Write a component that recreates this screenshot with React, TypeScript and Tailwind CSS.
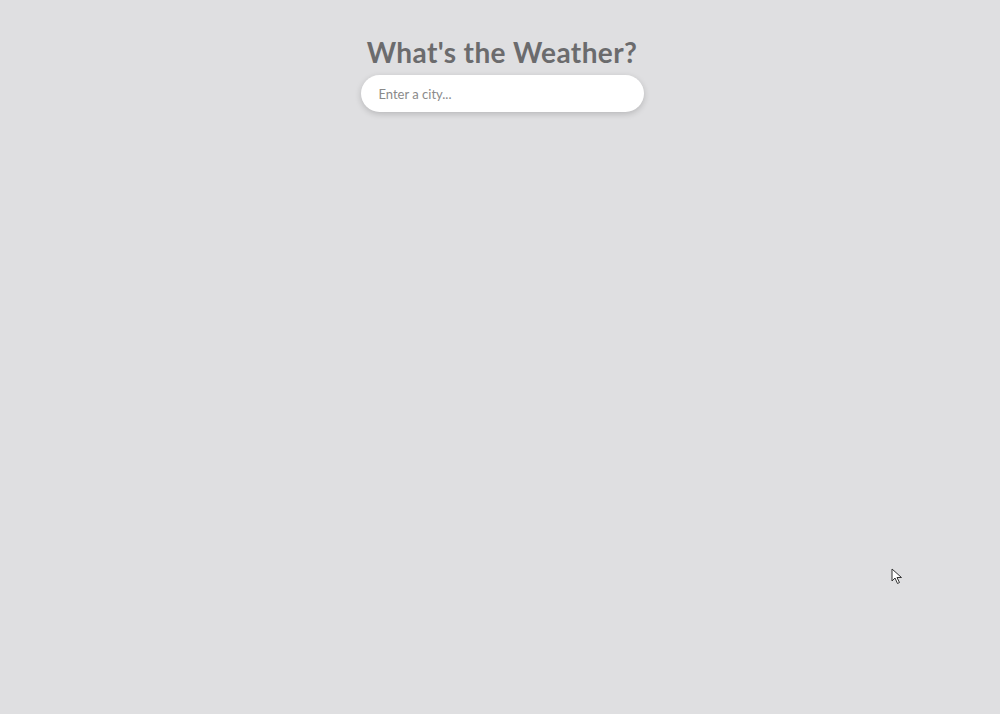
import { useState } from 'react';

export default function App() {
  const [city, setCity] = useState('');

  return (
    <div className="relative flex min-h-[714px] w-full flex-col items-center bg-[#dfdfe1] pl-[4px] pt-[35px] font-['Lato','Noto_Sans',sans-serif]">
      <h1 className="text-[28px] font-bold leading-[34px] tracking-[0.4px] text-[#6b6b6d]">What's the Weather?</h1>
      <input
        type="text"
        value={city}
        onChange={(e) => setCity(e.target.value)}
        placeholder="Enter a city..."
        className="mt-[6px] h-[37px] w-[283px] rounded-full bg-white px-[18px] text-[13px] text-[#555] shadow-[0_2px_6px_rgba(0,0,0,0.18)] outline-none placeholder:text-[#8a8a8a]"
      />

      {/* mouse pointer captured in the screenshot */}
      <svg className="absolute left-[891px] top-[568px]" width="12" height="17" viewBox="0 0 12 17">
        <path d="M1 1 L1 13 L4 10 L6.5 15.5 L8.5 14.5 L6 9.5 L10.5 9.5 Z" fill="#fff" stroke="#333" strokeWidth="1" strokeLinejoin="round" />
      </svg>
    </div>
  );
}
